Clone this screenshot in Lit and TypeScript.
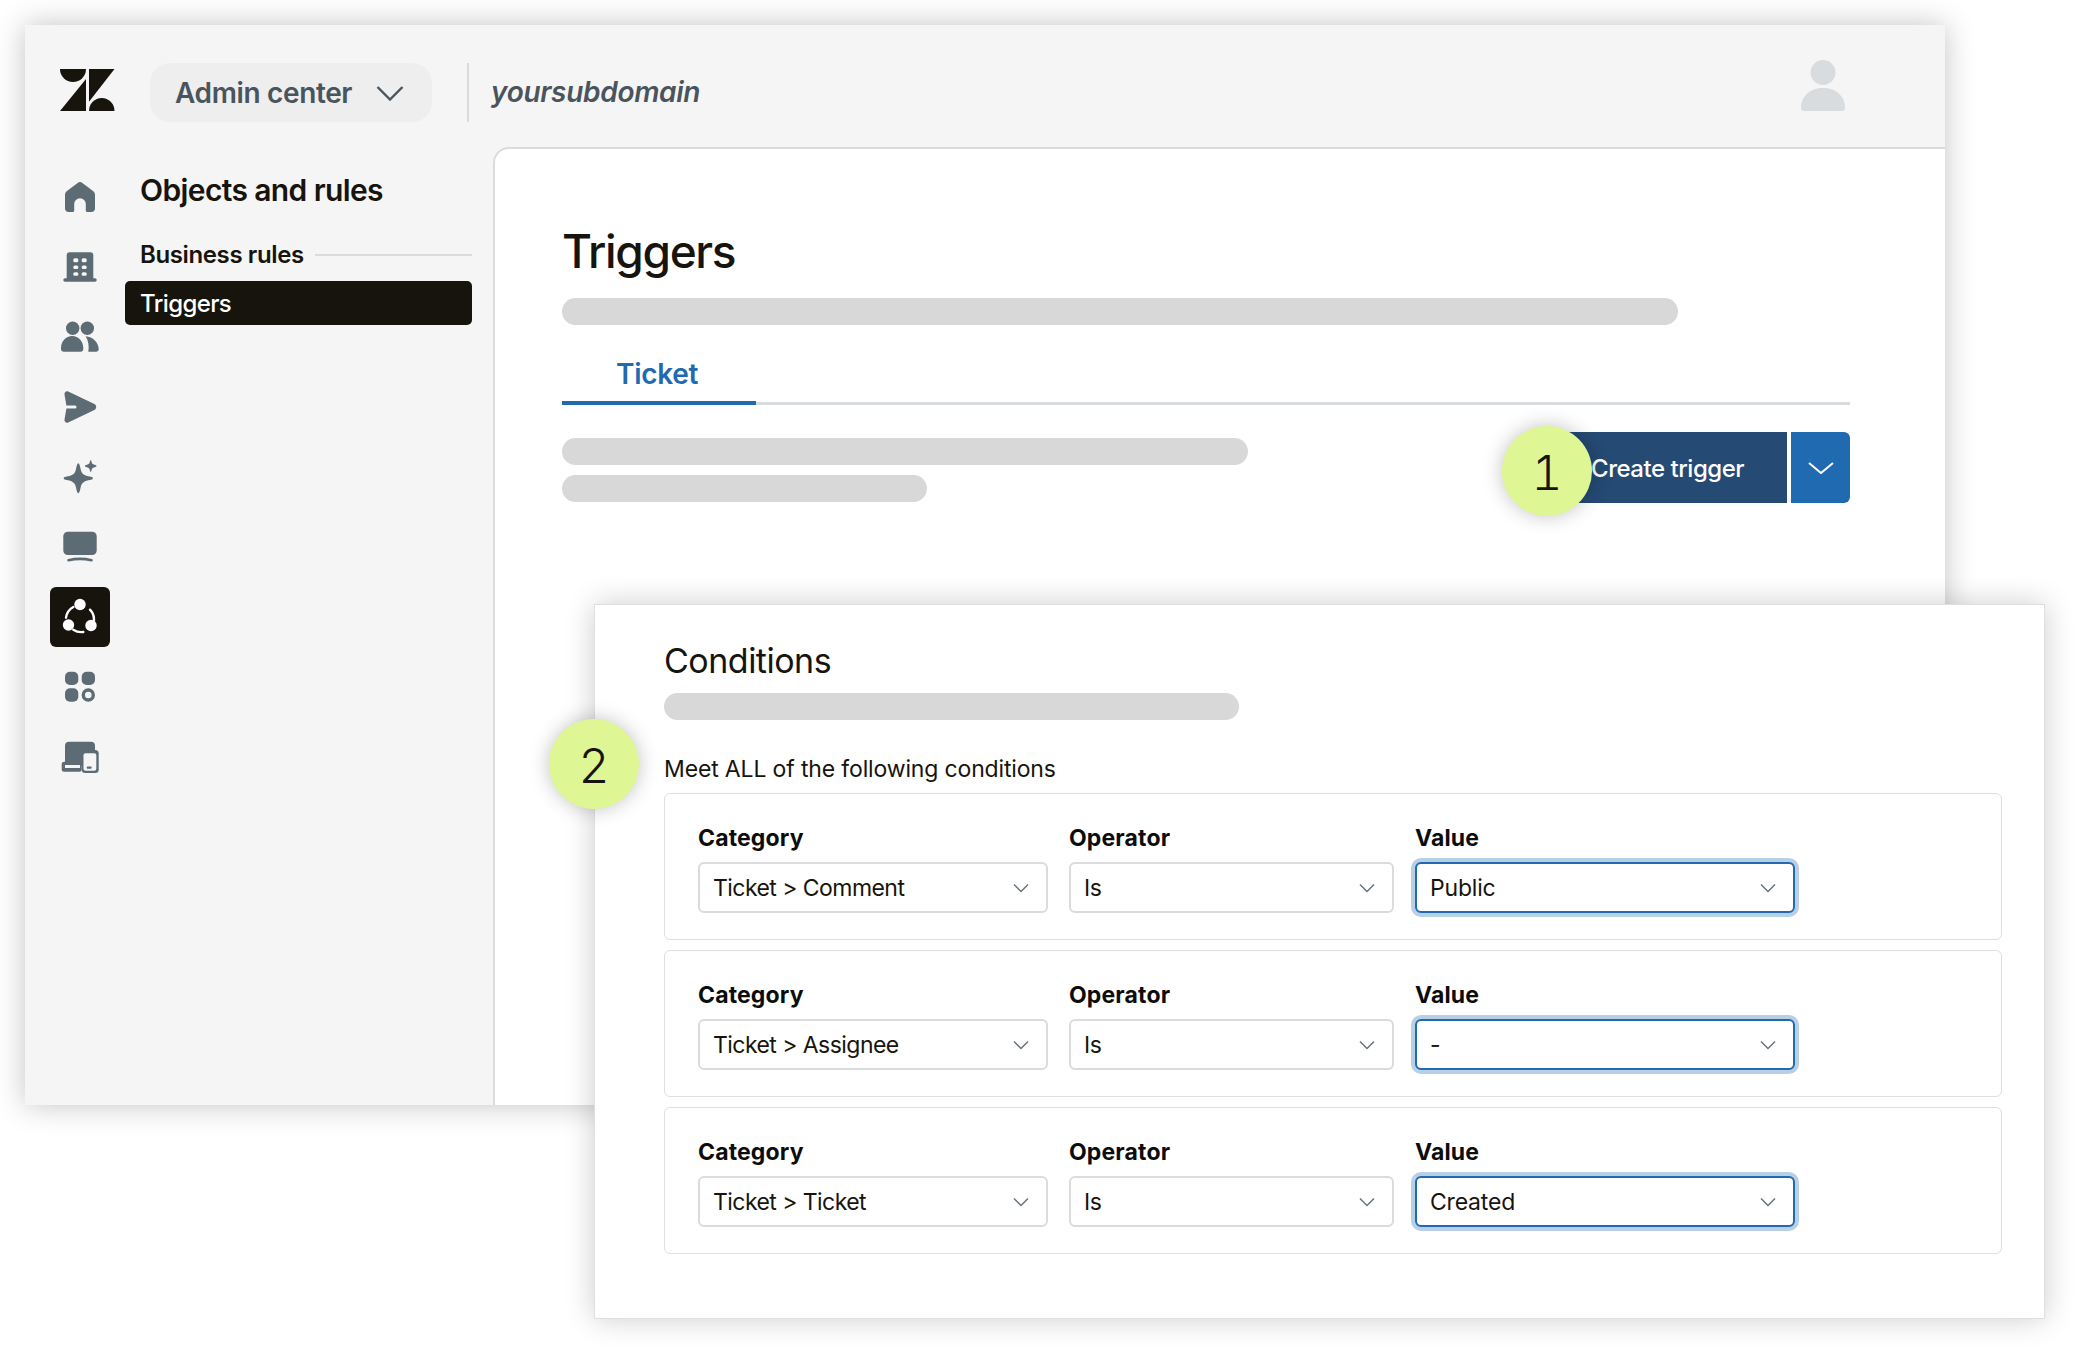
import { LitElement, html, css, svg } from "lit";
import { customElement } from "lit/decorators.js";

const G = "#5d6b74";
const BG = "#f5f5f5";

const navIcons = [
  svg`<path fill="${G}" d="M20 5c.9 0 1.7.4 2.4 1L33 14c1.300 1 2 2.300 2 4v13.500c0 2-1.500 3.500-3.500 3.500H27c-.8 0-1.200-.5-1.200-1.200V27a5.800 5.800 0 0 0-11.600 0v6.800c0 .7-.4 1.200-1.200 1.200H8.500C6.500 35 5 33.500 5 31.500V18c0-1.700.7-3 2-4L17.600 6c.7-.6 1.500-1 2.400-1z"/>`,
  svg`<g fill="${G}"><path d="M9.700 5.300h20.600a3 3 0 0 1 3 3V32H6.700V8.300a3 3 0 0 1 3-3z"/><rect x="3.300" y="31.300" width="33.400" height="3.400" rx="1.700"/></g>
    <g fill="${BG}"><rect x="13.300" y="11.300" width="5" height="4" rx="1.500"/><rect x="21.700" y="11.300" width="5" height="4" rx="1.500"/><rect x="13.300" y="18.500" width="5" height="3.500" rx="1.500"/><rect x="21.700" y="18.500" width="5" height="3.500" rx="1.500"/><rect x="13.300" y="25.300" width="5" height="3.400" rx="1.500"/><rect x="21.700" y="25.300" width="5" height="3.400" rx="1.500"/></g>`,
  svg`<g fill="${G}"><circle cx="12.700" cy="11.300" r="6.700"/><circle cx="27.300" cy="11.300" r="6.700"/><path d="M1 31c0-6.700 5-12 11.200-12s11.100 5.300 11.100 12v.7a3 3 0 0 1-3 3H4a3 3 0 0 1-3-3z"/><path d="M25.600 19.200c7.300.6 13.100 6.300 13.100 12.800 0 1.700-1.100 2.700-2.700 2.700h-7.700c1-5.500.2-11-2.700-15.500z"/></g>`,
  svg`<path fill="${G}" d="M4.500 7.400c-.4-2.200 1.700-3.900 3.700-3L34.400 17c2.400 1.100 2.400 4.900 0 6L8.200 35.600c-2 .9-4.100-.8-3.700-3L6.400 21.500H15a1.500 1.500 0 0 0 0-3H6.400z"/>`,
  svg`<g fill="${G}"><path d="M18.300 6.300C19.300 6.300 20 9 20.600 12C21.500 16.500 23.500 18.600 31 19.800C33.500 20.300 33.500 22.300 31 22.800C23.500 24 21.500 26 20.600 30.600C20 33.600 19.300 36.300 18.300 36.300C17.300 36.300 16.600 33.600 16 30.600C15.100 26 13.100 24 5.600 22.800C3.100 22.300 3.100 20.300 5.600 19.800C13.100 18.600 15.100 16.500 16 12C16.600 9 17.300 6.300 18.300 6.300z"/><path d="M30.700 3c.4 0 .6 1 .9 2 .5 1.800 1.300 2.500 3.700 3 1.700.4 1.700 1.600 0 2-2.400.5-3.200 1.200-3.700 3-.3 1-.5 2-.9 2s-.6-1-.9-2c-.5-1.800-1.300-2.500-3.700-3-1.700-.4-1.700-1.600 0-2 2.400-.5 3.200-1.200 3.700-3 .3-1 .5-2 .9-2z"/></g>`,
  svg`<rect x="3.300" y="4.700" width="33.400" height="23.300" rx="4.500" fill="${G}"/><path d="M8.500 33.300Q20 30.400 31.500 33.300" fill="none" stroke="${G}" stroke-width="2.600" stroke-linecap="round"/>`,
  svg`<g fill="#fff"><circle cx="20" cy="7.500" r="5.700"/><circle cx="8.500" cy="28" r="5.700"/><circle cx="31" cy="28.500" r="5.700"/></g><g fill="none" stroke="#fff" stroke-width="2.400" stroke-linecap="round"><path d="M6 20.700A14.500 14.500 0 0 1 13.300 10"/><path d="M30 12.700A14.500 14.500 0 0 1 34 23.300"/><path d="M13.300 32.700A14.500 14.500 0 0 0 23.300 35"/></g>`,
  svg`<g fill="${G}"><rect x="5" y="4.700" width="13.300" height="13.300" rx="5"/><rect x="21.700" y="4.700" width="13.300" height="13.300" rx="5"/><rect x="5" y="21.300" width="13.300" height="13.400" rx="5"/></g><circle cx="28.300" cy="28" r="5" fill="none" stroke="${G}" stroke-width="3.400"/>`,
  svg`<g fill="${G}"><rect x="5" y="4.700" width="30" height="24" rx="4"/><rect x="1.700" y="24.700" width="20" height="10" rx="2.500"/><rect x="21.700" y="13" width="17" height="23" rx="3.500"/></g><rect x="5" y="28" width="15" height="3" fill="${BG}"/><rect x="23.500" y="16.300" width="12.800" height="17.400" rx="2" fill="${BG}"/><rect x="26.700" y="29.500" width="5" height="2.200" rx="1" fill="${G}"/>`,
];

const rows = [
  { category: "Ticket > Comment", value: "Public" },
  { category: "Ticket > Assignee", value: "-" },
  { category: "Ticket > Ticket", value: "Created" },
];

const chevron = html`<svg class="sel-chev" viewBox="0 0 16 10" width="16" height="10"><path d="M1 1.500l7 7 7-7" fill="none" stroke="#68737d" stroke-width="1.500"/></svg>`;

@customElement("app-root")
export class AppRoot extends LitElement {
  static styles = css`
    :host {
      display: block;
      position: relative;
      width: 2078px;
      height: 1352px;
      background: #fff;
      overflow: hidden;
      font-family: Inter, "Liberation Sans", sans-serif;
      color: #17140d;
    }
    .window {
      position: absolute;
      left: 25px;
      top: 25px;
      width: 1920px;
      height: 1080px;
      background: #f5f5f5;
      box-shadow: 0 0 28px rgba(0, 0, 0, 0.24);
      display: flex;
      flex-direction: column;
    }
    .header {
      flex: none;
      height: 122px;
      box-sizing: border-box;
      padding: 35px 100px 0 35px;
      display: flex;
      align-items: flex-start;
    }
    .logo {
      margin-top: 9px;
      margin-right: 35px;
      flex: none;
    }
    .pill {
      width: 282px;
      height: 59px;
      margin-top: 3px;
      box-sizing: border-box;
      padding-left: 25px;
      border-radius: 20px;
      background: #eeeeee;
      display: flex;
      align-items: center;
      gap: 24px;
      color: #49545c;
      font-size: 28px;
      font-weight: 600;
      letter-spacing: -0.36px;
      white-space: nowrap;
    }
    .divider {
      width: 2px;
      height: 59px;
      margin: 3px 22px 0 35px;
      background: #d8dcde;
    }
    .subdomain {
      margin-top: 3px;
      line-height: 59px;
      font-size: 28px;
      font-weight: 600;
      font-style: italic;
      letter-spacing: -0.3px;
      color: #49545c;
    }
    .avatar {
      margin-left: auto;
    }
    .body {
      flex: 1;
      min-height: 0;
      display: flex;
    }
    .rail {
      flex: none;
      width: 100px;
      box-sizing: border-box;
      padding: 20px 0 0 25px;
      display: flex;
      flex-direction: column;
      gap: 10px;
    }
    .nav-item {
      width: 60px;
      height: 60px;
      border-radius: 6px;
      display: flex;
      align-items: center;
      justify-content: center;
    }
    .nav-item.active {
      background: #17140d;
    }
    .side {
      flex: none;
      width: 347px;
      margin-right: 21px;
      box-sizing: border-box;
      padding-top: 25px;
    }
    .side h2 {
      margin: 0 0 32px 15px;
      font-size: 30px;
      line-height: 36px;
      font-weight: 600;
      letter-spacing: -0.62px;
    }
    .side-group {
      display: flex;
      align-items: center;
      gap: 11px;
      margin: 0 0 11px 15px;
      font-size: 24px;
      line-height: 30px;
      font-weight: 600;
      letter-spacing: -0.38px;
      white-space: nowrap;
    }
    .side-group i {
      flex: 1;
      height: 2px;
      background: #d8dcde;
    }
    .side-item {
      height: 44px;
      box-sizing: border-box;
      line-height: 46px;
      padding-left: 15px;
      border-radius: 5px;
      background: #17140d;
      color: #fff;
      font-size: 24px;
      font-weight: 500;
      letter-spacing: -0.6px;
    }
    .main {
      flex: 1;
      min-width: 0;
      box-sizing: border-box;
      padding: 74px 95px 0 67px;
      background: #fff;
      border-left: 2px solid #d8dcde;
      border-top: 2px solid #d8dcde;
      border-top-left-radius: 16px;
    }
    .main h1 {
      margin: 0 0 19px;
      font-size: 46px;
      line-height: 56px;
      font-weight: 550;
      letter-spacing: -1.35px;
    }
    .ph {
      height: 27px;
      border-radius: 13.500px;
      background: #d8d8d8;
    }
    .tabs {
      margin-top: 31px;
      border-bottom: 3px solid #d8dcde;
      display: flex;
    }
    .tab {
      width: 194px;
      box-sizing: border-box;
      padding: 0 0 9px 54px;
      margin-bottom: -3px;
      border-bottom: 4px solid #1f6ab0;
      color: #1f6ab0;
      font-size: 28px;
      line-height: 36px;
      font-weight: 600;
      letter-spacing: -0.3px;
    }
    .actions {
      margin-top: 27px;
      display: flex;
      justify-content: space-between;
      align-items: flex-start;
    }
    .ph-stack {
      padding-top: 6px;
      display: flex;
      flex-direction: column;
      gap: 10px;
    }
    .split {
      position: relative;
      display: flex;
      gap: 4px;
    }
    .btn {
      height: 71px;
      box-sizing: border-box;
      color: #fff;
      font-size: 24px;
      font-weight: 500;
      letter-spacing: -0.47px;
      display: flex;
      align-items: center;
    }
    .btn.primary {
      width: 227px;
      padding: 1px 0 0 31px;
      background: #254a74;
      border-radius: 6px 0 0 6px;
    }
    .btn.more {
      width: 59px;
      justify-content: center;
      background: #1f6ab0;
      border-radius: 0 6px 6px 0;
    }
    .step {
      position: absolute;
      width: 90px;
      height: 90px;
      box-sizing: border-box;
      padding-top: 3px;
      border-radius: 50%;
      background: #def794;
      box-shadow: 0 0 20px rgba(0, 0, 0, 0.24);
      display: flex;
      align-items: center;
      justify-content: center;
      font-size: 48px;
      font-weight: 300;
      font-feature-settings: "tnum";
      color: #17140d;
    }
    .split .step {
      left: -58px;
      top: -6px;
    }
    .panel {
      position: absolute;
      left: 594px;
      top: 604px;
      width: 1451px;
      height: 715px;
      box-sizing: border-box;
      padding: 34px 42px 0 69px;
      background: #fff;
      border: 1px solid #dddfe0;
      box-shadow: 0 0 28px rgba(0, 0, 0, 0.2);
    }
    .panel .step {
      left: -46px;
      top: 114px;
    }
    .panel h2 {
      margin: 0 0 10px;
      font-size: 34px;
      line-height: 44px;
      font-weight: 400;
      letter-spacing: -0.5px;
    }
    .meet {
      margin: 34px 0 9px;
      font-size: 23px;
      line-height: 30px;
      letter-spacing: -0.15px;
    }
    .cards {
      display: flex;
      flex-direction: column;
      gap: 10px;
    }
    .card {
      height: 147px;
      box-sizing: border-box;
      padding: 29px 0 0 33px;
      border: 1px solid #dddfe0;
      border-radius: 6px;
      display: grid;
      grid-template-columns: 350px 325px 380px;
      column-gap: 21px;
      align-content: start;
    }
    .label {
      font-size: 23px;
      line-height: 30px;
      font-weight: 700;
      letter-spacing: 0.15px;
      color: #0c0c0c;
      margin-bottom: 9px;
    }
    .select {
      height: 51px;
      box-sizing: border-box;
      padding: 1px 17px 0 13px;
      border: 2px solid #d8dcde;
      border-radius: 6px;
      background: #fff;
      font-size: 23px;
      letter-spacing: -0.55px;
      display: flex;
      align-items: center;
      justify-content: space-between;
    }
    .select.focus {
      border-color: #1f6ab0;
      box-shadow: 0 0 0 4px #b9cfe6;
      letter-spacing: -0.2px;
    }
    .sel-chev {
      flex: none;
    }
  `;

  render() {
    return html`
      <div class="window">
        <header class="header">
          <svg class="logo" width="55" height="42" viewBox="0 0 55 42" fill="#17140d">
            <path d="M0 0h26a13 13 0 0 1-26 0z" />
            <path d="M26 10v32H0z" />
            <path d="M54.500 0H29v32.700z" />
            <path d="M29 42a12.750 13 0 0 1 25.500 0z" />
          </svg>
          <div class="pill">
            <span>Admin center</span>
            <svg width="28" height="16" viewBox="0 0 28 16"><path d="M1.500 2l12.500 12.500L26.500 2" fill="none" stroke="#49545c" stroke-width="2.400" /></svg>
          </div>
          <div class="divider"></div>
          <div class="subdomain">yoursubdomain</div>
          <svg class="avatar" width="44" height="51" viewBox="0 0 44 51" fill="#d8dcde">
            <circle cx="22" cy="12.500" r="12.500" />
            <path d="M0 48c0-12.500 9.800-20 22-20s22 7.500 22 20c0 1.800-1 3-3 3H3c-2 0-3-1.200-3-3z" />
          </svg>
        </header>
        <div class="body">
          <nav class="rail">
            ${navIcons.map(
              (icon, i) => html`<div class="nav-item ${i === 6 ? "active" : ""}"><svg width="40" height="40" viewBox="0 0 40 40">${icon}</svg></div>`
            )}
          </nav>
          <aside class="side">
            <h2>Objects and rules</h2>
            <div class="side-group"><span>Business rules</span><i></i></div>
            <div class="side-item">Triggers</div>
          </aside>
          <main class="main">
            <h1>Triggers</h1>
            <div class="ph" style="width:1116px"></div>
            <div class="tabs"><div class="tab">Ticket</div></div>
            <div class="actions">
              <div class="ph-stack">
                <div class="ph" style="width:686px"></div>
                <div class="ph" style="width:365px"></div>
              </div>
              <div class="split">
                <div class="btn primary">Create trigger</div>
                <div class="btn more">
                  <svg width="26" height="12" viewBox="0 0 26 12"><path d="M1 1l12 10L25 1" fill="none" stroke="#fff" stroke-width="2" /></svg>
                </div>
                <div class="step">1</div>
              </div>
            </div>
          </main>
        </div>
      </div>
      <section class="panel">
        <h2>Conditions</h2>
        <div class="ph" style="width:575px"></div>
        <div class="meet">Meet ALL of the following conditions</div>
        <div class="step">2</div>
        <div class="cards">
          ${rows.map(
            (r) => html`
              <div class="card">
                <div>
                  <div class="label">Category</div>
                  <div class="select"><span>${r.category}</span>${chevron}</div>
                </div>
                <div>
                  <div class="label">Operator</div>
                  <div class="select"><span>Is</span>${chevron}</div>
                </div>
                <div>
                  <div class="label">Value</div>
                  <div class="select focus"><span>${r.value}</span>${chevron}</div>
                </div>
              </div>
            `
          )}
        </div>
      </section>
    `;
  }
}
